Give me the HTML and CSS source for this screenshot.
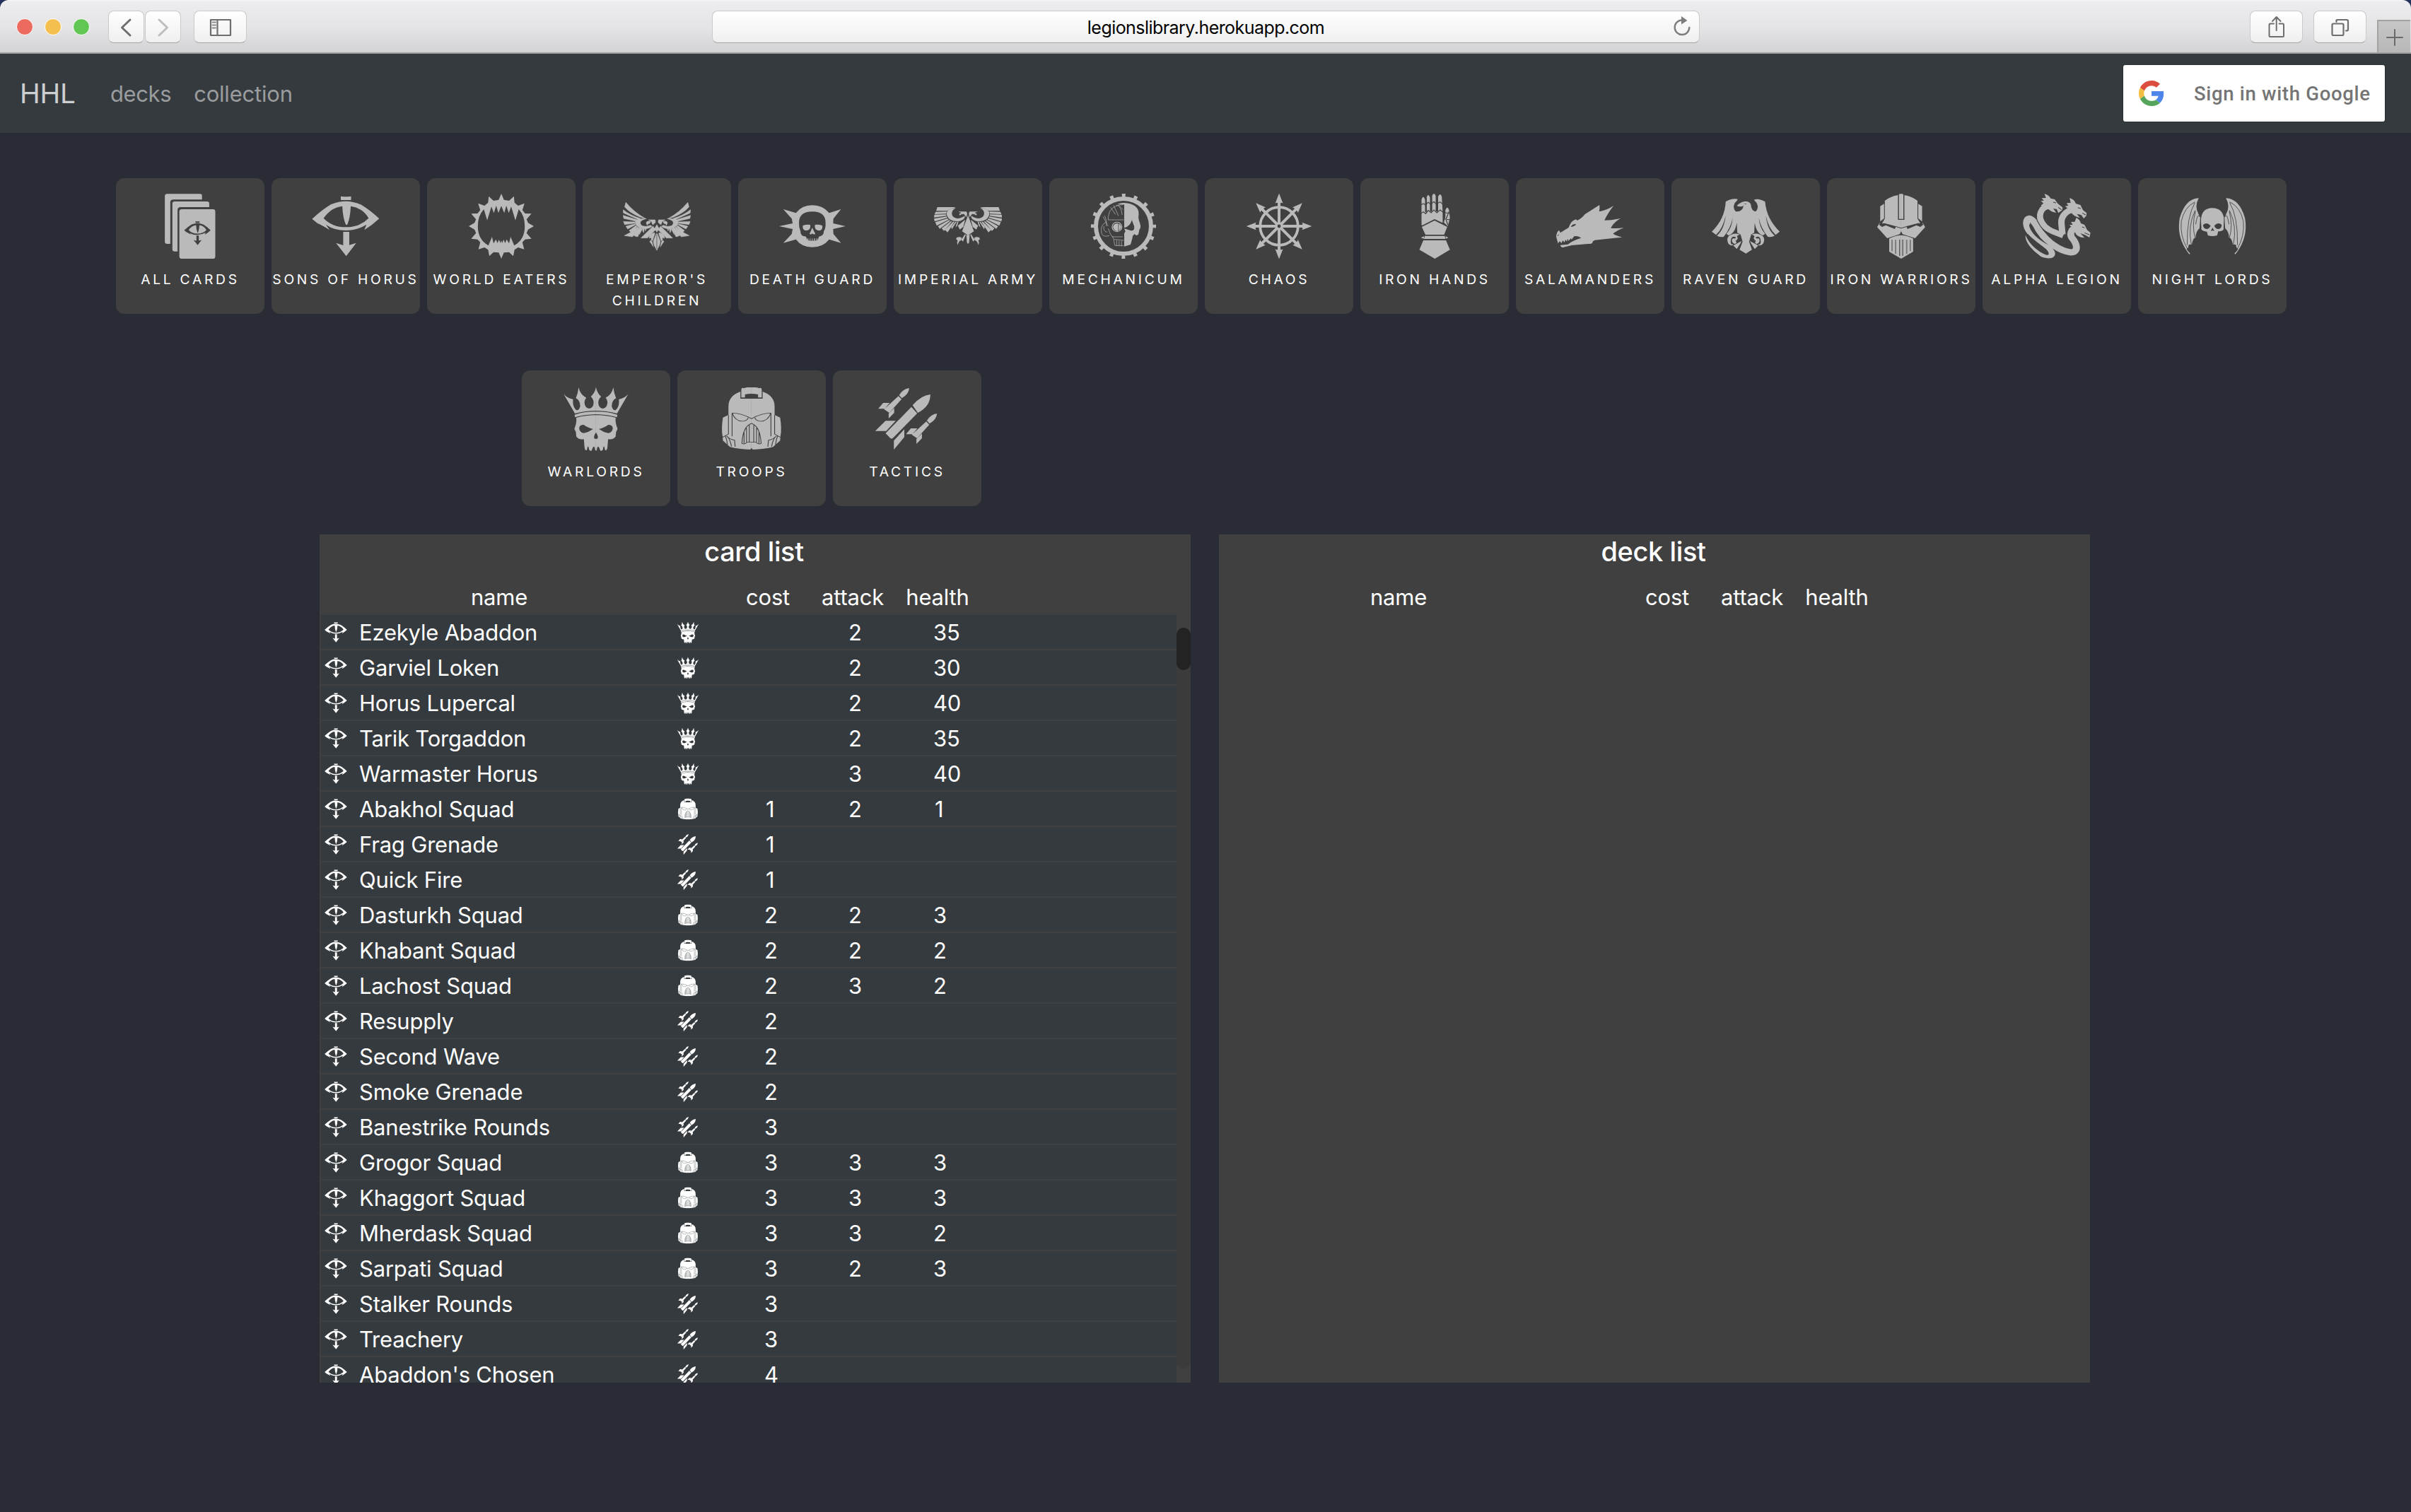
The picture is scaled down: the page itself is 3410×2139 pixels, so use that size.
FILE: index.html
```
<!DOCTYPE html>
<html lang="en">
<head>
<meta charset="utf-8">
<title>HHL</title>
<link rel="stylesheet" href="styles.css">
</head>
<body>
<svg class="sprite" aria-hidden="true">
<symbol id="cards" viewBox="166.6 102 224.7 276" preserveAspectRatio="none">
<path d="M203 103H311Q318 103 318 110V127H224Q213 127 213 138V315H203Q195 315 195 306V112Q195 103 203 103Z"/>
<path d="M228 135H334Q342 135 342 143V159H247Q237 160 237 171V347H228Q220 347 220 338V144Q220 135 228 135Z"/>
<rect x="243" y="168" width="119" height="210" rx="8" ry="10"/>
<g class="cutfill" transform="translate(-9.7 173.8) scale(.394 .4)"><path fill-rule="evenodd" d="M777 113Q793 116 811 113V129H777ZM682 209Q715 170 745 147Q770 134 794 134Q818 134 845 149Q878 175 904 208L880 234L855 256L862 233Q830 258 794 258Q755 258 728 234L740 256Q715 236 700 228ZM720 206Q745 160 782 155Q784 205 793 232Q797 238 799 232Q808 205 810 155Q850 163 869 206Q840 244 794 244Q748 244 720 206ZM785 264H805V320L828 311L795 367L761 311L785 321Z"/></g>
</symbol>
<symbol id="horus" viewBox="681 102 224.7 276" preserveAspectRatio="none">
<path fill-rule="evenodd" d="M777 113Q793 116 811 113V129H777ZM682 209Q715 170 745 147Q770 134 794 134Q818 134 845 149Q878 175 904 208L880 234L855 256L862 233Q830 258 794 258Q755 258 728 234L740 256Q715 236 700 228ZM720 206Q745 160 782 155Q784 205 793 232Q797 238 799 232Q808 205 810 155Q850 163 869 206Q840 244 794 244Q748 244 720 206ZM785 264H805V320L828 311L795 367L761 311L785 321Z"/>
</symbol>
<symbol id="eaters" viewBox="1195.9 102 224.7 276" preserveAspectRatio="none">
<path id="eat" d="M1308.3 102L1317 128L1334 132L1350 113L1352 140L1364 153L1385 143L1378 172L1387 186L1408 187L1392 211L1397 226L1416 240L1397 254L1392 269L1408 293L1387 296L1378 308L1384 338L1364 330L1352 340L1348 367L1334 350L1317 352L1308 378V300L1311 312L1316 297L1321 312L1326 296L1334 313L1339 285L1351 322Q1386 297 1386 240Q1386 195 1366 168L1355 215L1341 157L1333 184L1325 153L1318 184L1308 153Z"/>
<use href="#eat" transform="translate(2616.6 0) scale(-1 1)"/>
</symbol>
<symbol id="emperor" viewBox="166.2 102 224.7 276" preserveAspectRatio="none">
<g id="emp" class="bold"><path d="M381 139L385 158Q370 182 333 202L316 208Q355 180 381 139ZM390 170L389 184L338 213L333 207Q368 193 390 170ZM390 194L388 207L347 219L341 214ZM389 220L385 233L351 227V222ZM381 240L375 252L349 234L350 230ZM370 258L363 269L344 242L347 237ZM359 262L386 280L359 285L338 246L342 243ZM342 258L348 284L341 284L331 249L336 246Z"/>
<path d="M359 277L348 283L330 250L335 246ZM336 262L331 249L326 251L336 275ZM325 262L326 250L320 250L322 268ZM316 260L318 250L313 250Z"/>
<path d="M284 213H306L297 219L292 234L283 224ZM299 219L310 219Q317 226 310 236Q309 228 302 228ZM313 208Q352 206 350 226Q345 248 318 251Q300 249 294 240L300 236Q316 245 328 238Q338 226 329 216Q322 211 313 208ZM291 240L331 290H310L283 256ZM278.5 234L286 250L278.5 265Z"/>
<path d="M278.5 341Q290 320 290 304L280 271V341ZM287 267Q303 275 304 288Q303 295 300 289Q296 285 297 300L293 302L285 272ZM299 300L302 306L298 312L290 328L294 306Z"/></g>
<use href="#emp" transform="translate(557 0) scale(-1 1)"/>
</symbol>
<symbol id="death" viewBox="681 102 224.7 276" preserveAspectRatio="none">
<path fill-rule="evenodd" d="M793 151Q828 151 849 184L888 168L863 208L862 228L903 240L862 252L863 273L888 311L849 296Q828 329 793 329Q758 329 739 296L697 311L725 273L728 252L683 240L728 228L725 208L697 168L739 184Q758 151 793 151ZM749 225Q749 178 793 178Q837 178 837 225Q838 248 831 262Q832 281 815 284L811 299Q793 304 777 299L772 284Q753 283 754 262Q748 245 749 225Z"/>
<path d="M762 237Q775 231 786 234Q790 256 772 259Q759 256 762 237ZM826 237Q813 231 802 234Q798 256 816 259Q829 256 826 237ZM793 247L784 272Q788 278 793 271Q799 278 803 272ZM777 292H780V301H777ZM785 292H787V302H785ZM792 292H794V302H792ZM799 292H802V302H799ZM807 292H810V302H807Z"/>
</symbol>
<symbol id="army" viewBox="1195.9 102 224.7 276" preserveAspectRatio="none">
<g id="arm"><path d="M1349 159H1410L1414 175H1378L1368 168ZM1379 178L1416 179L1419 189L1381 187ZM1381 190L1420 191L1421 203L1380 196ZM1379 199L1421 208L1419 220L1377 204ZM1376 207L1417 223L1412 238L1373 212ZM1371 214L1408 240L1402 251L1367 217ZM1365 219L1396 249L1388 260L1361 220ZM1358 221L1385 256L1376 266L1353 221ZM1350 221L1364 244L1362 253L1346 221ZM1344 221L1350 245L1344 238L1340 220Z"/>
<path d="M1349 162Q1385 166 1378 195Q1368 225 1335 218Q1318 212 1319 196L1327 202Q1348 215 1360 196Q1368 178 1349 162ZM1314 178H1341L1330 184Q1341 186 1336 194Q1330 187 1322 188L1314 202L1311 186ZM1308 192L1328 262L1308 279ZM1318 212L1342 238L1336 254L1324 243ZM1308 279L1314 276L1312 310L1308 316ZM1318 273L1331 298L1325 305L1316 277ZM1329 290Q1335 283 1346 288L1348 296Q1340 297 1345 310L1342 320Q1340 303 1332 300Z"/></g>
<use href="#arm" transform="translate(2617 0) scale(-1 1)"/>
</symbol>
<symbol id="mech" viewBox="166.2 102 224.7 276" preserveAspectRatio="none">
<g transform="translate(278.5 240) scale(2.34 3)"><circle class="line" r="39" stroke-width="6"/><circle class="line" r="43.7" stroke-width="4.8" stroke-dasharray="5 12.16" stroke-dashoffset="2.5"/></g>
<path d="M258 147Q270 140 281 141Q330 145 329 190Q326 205 333 228Q338 245 331 256L328 274Q322 284 315 273Q308 280 308 290L302 318L281 326V271L285 262L281 250L300 257Q316 264 314 240L306 214Q302 240 281 247V148Z"/>
<path class="line" stroke-width="1.8" d="M279 148Q232 150 228 200V213H279M246 152L262 196M236 160L252 190M254 150Q272 155 274 192M262 150L277 170M216 195L222 216V240M211 200L228 240M222 222Q200 235 206 270Q210 288 232 280M228 250L236 275L245 290L250 322H279M214 240Q210 262 224 265M240 285H276M256 300V324M264 302V325M272 302V326M248 296L279 300"/>
<ellipse class="line" stroke-width="3" cx="257" cy="243" rx="16" ry="20"/><path d="M244 243Q246 229 257 228Q270 229 271 243Q268 260 257 261Q246 258 244 243Z"/><path class="cut" stroke-width="2" d="M262 228V262"/>
</symbol>
<symbol id="chaos" viewBox="681 102 224.7 276" preserveAspectRatio="none">
<g transform="translate(793.5 240) scale(2.34 3)"><circle class="line" r="26.8" stroke-width="3.8"/>
<g id="spoke"><path d="M-2 0V-33Q-4-34-5.6-32L0-46.3L5.6-32Q4-34 2-33V0Z"/><path d="M-2 0V33Q-4 34-5.6 32L0 46.3L5.6 32Q4 34 2 33V0Z"/></g>
<use href="#spoke" transform="rotate(45)"/><use href="#spoke" transform="rotate(90)"/><use href="#spoke" transform="rotate(135)"/><circle r="5"/><circle class="cutfill" r="2.4"/></g>
</symbol>
<symbol id="hands" viewBox="1195.9 102 224.7 276" preserveAspectRatio="none">
<path d="M1265 235V128Q1270 104 1277 128V182L1282 178V118Q1287 96 1293 118V178L1300 178V112Q1306 92 1312 112V178L1320 178V114Q1327 96 1332 114L1335 180V226L1308 210L1268 236ZM1339 224L1344 200V172Q1351 150 1356 172L1359 205L1352 240ZM1308 216L1350 243L1340 276H1278L1266 243ZM1276 281H1342L1344 294H1273ZM1263 289L1273 283V293ZM1354 289L1345 283V293ZM1271 300H1346L1359 340L1309 378L1258 340Z"/>
<path class="cut" stroke-width="3" d="M1262 150L1271 144L1279 150L1287 138L1295 147L1306 136L1314 146L1326 137L1335 146M1262 187L1271 179L1279 187L1287 173L1297 183L1306 171L1316 183L1327 171L1337 182M1342 182L1358 186M1341 209L1360 213M1356 178L1346 210L1352 235"/>
<path class="cut" stroke-width="5" d="M1280 120V178M1297 115V178M1316 115V174"/>
</symbol>
<symbol id="salam" viewBox="198.8 102 268.8 276" preserveAspectRatio="none">
<path fill-rule="evenodd" d="M199 285Q200 262 211 258L215 268L248 246Q258 215 278 211L281 216Q300 208 312 190L370 150Q372 162 369 178Q400 172 426 153Q400 190 390 215Q425 215 454 206Q425 225 415 248Q440 250 467 247Q435 260 424 272Q440 282 460 287L352 299Q343 302 341 312Q337 316 325 315L260 321L226 330Q217 330 215 320L245 317Q265 300 298 290Q285 279 270 283L260 297L257 291L248 303L245 293L241 305L236 297L231 309L225 300L220 312L213 304L206 313ZM257 243Q262 230 277 231Q275 240 257 243ZM204 279L210 273L206 283Z"/>
</symbol>
<symbol id="raven" viewBox="814.8 102 268.8 276" preserveAspectRatio="none">
<path fill-rule="evenodd" d="M914 154Q930 134 950 134Q972 136 971 158Q977 178 990 177Q1003 160 992 140L982 128Q1000 120 1026 136Q1032 210 1084 263L1068 277Q1040 250 1029 195Q1035 255 1064 280Q1055 288 1037 285Q1010 250 1001 205Q1005 250 1026 272L1018 279Q992 272 985 225L983 268L971 275L963 306L974 340L950 356L925 340L937 306L929 275L916 268L914 225Q907 272 881 279L873 272Q894 250 898 205Q889 250 862 285Q844 288 835 280Q864 255 870 195Q859 250 832 277L815 263Q867 210 870 136Q895 120 918 125Q915 133 907 140Q896 160 909 177Q935 182 941 153Q930 160 914 154ZM941 147L953 143L950 147Z"/>
<path id="claw" d="M972 276Q990 268 1005 275Q1025 280 1022 303Q1018 324 1001 321Q995 315 1006 317Q1012 305 1006 290Q1000 280 988 288Q995 296 999 290Q1010 300 999 312Q990 320 986 308L990 302Q983 300 981 289Q990 280 972 276ZM966 303L999 322L985 337L970 312Z"/><use href="#claw" transform="translate(1899 0) scale(-1 1)"/>
</symbol>
<symbol id="warriors" viewBox="-107.3 102 264.1 276" preserveAspectRatio="none">
<g id="war"><path fill-rule="evenodd" d="M24.5 102L33 104V209H24.5ZM37 108Q70 115 88 132V208L99 228L90 227L46 240L24.5 247V213H37ZM91 145L106 155V220L91 207ZM106 222L118 244L79 291L30 274L24.5 262V250L46 243L49 252L84 236L99 243L110 234ZM24.5 278Q50 280 71 292V348L24.5 378Z"/>
<path class="cut" stroke-width="3" d="M30.5 297V366"/><path class="cut" stroke-width="5" opacity=".55" d="M46 298V357M60 298V346"/></g>
<use href="#war" transform="translate(49 0) scale(-1 1)"/>
</symbol>
<symbol id="alpha" viewBox="497.9 102 264.1 276" preserveAspectRatio="none">
<path class="line" stroke-width="24" d="M604 154C562 158 558 200 573 226C590 258 625 266 655 280"/>
<path class="line" stroke-width="25" d="M694 170C660 175 646 205 648 228L652 275"/>
<path class="line" stroke-width="27" d="M716 248C690 245 678 268 688 288C712 318 714 351 685 351C640 345 595 310 560 256C545 222 533 208 522 208C508 212 508 240 528 266"/>
<path d="M500 235C503 270 545 300 580 330C600 345 605 365 590 362C560 350 525 320 508 278C506 315 545 350 570 370C605 384 630 374 622 348C612 320 560 290 532 250Z"/>
<path class="cutfill" d="M606 283Q650 286 678 306Q686 323 670 325Q640 318 606 283ZM523 232Q532 228 544 256Q562 292 598 320Q535 285 523 240Z"/>
<path d="M582 102Q600 108 606 122L622 126L634 144L652 160Q655 172 643 178L636 184L630 168L616 165L628 183Q605 180 590 160L568 152L578 143L568 133L580 132L571 121L588 120ZM680 120Q700 128 704 144L722 150L732 172L746 184L745 196L735 207L725 192L708 188L720 204Q695 200 684 178L660 174L672 164L662 155L675 153L668 142L684 141ZM706 204Q720 212 724 228L738 234L748 256L761 268L757 288L742 278L722 270L738 289Q708 288 700 264L676 250L690 246L679 235L692 233L685 222L700 221Z"/>
<path class="cut" stroke-width="3" d="M616 138L627 141M636 160L648 170M712 161L723 165M730 184L742 192M729 243L738 247M738 268L756 276"/>
<path class="cut" stroke-width="3" d="M553 215C572 255 590 275 612 285M672 205Q664 230 669 266"/>
</symbol>
<symbol id="night" viewBox="1103.1 102 264.1 276" preserveAspectRatio="none">
<g id="nig"><path d="M1288 121Q1340 123 1362 205Q1376 290 1325 359L1321 356Q1334 342 1335 336Q1328 335 1327 318L1315 318Q1311 290 1300 288Q1300 262 1285 249L1282 205L1289 188Q1306 155 1288 121Z"/>
<path class="cut" stroke-width="2.4" d="M1303 137Q1345 160 1356 220Q1362 280 1332 337M1303 140Q1335 200 1333 320M1302 173Q1332 240 1317 318M1301 176Q1316 240 1302 288M1285 200Q1292 180 1300 232"/></g>
<use href="#nig" transform="translate(2470.4 0) scale(-1 1)"/>
<path fill-rule="evenodd" d="M1191 215Q1192 164 1235 163Q1279 164 1281 215L1279 254Q1272 262 1258 262L1254 279Q1235 285 1218 279L1214 263Q1196 262 1192 252ZM1199 235Q1213 220 1228 238Q1225 252 1211 252Q1200 250 1199 235ZM1272 235Q1258 220 1243 238Q1246 252 1260 252Q1271 250 1272 235ZM1236 246L1229 261L1236 258L1243 261Z"/>
<path class="cut" stroke-width="2" d="M1189 205L1191 250M1282 205L1280 250"/>
</symbol>
<symbol id="crown" viewBox="149.9 108 221.4 276" preserveAspectRatio="none">
<g id="cro"><path d="M260.4 113Q264 138 277 153Q268 165 268 178Q268 202 283 204Q298 202 298 175Q297 165 292 158Q312 145 317 114Q319 140 326 160Q311 170 312 195Q316 214 325 210Q338 195 335 165Q355 160 366 142L329 225Q295 213 260.4 213ZM260.4 217Q300 217 330 230L329 241Q300 229 260.4 228ZM260.4 232Q295 232 325 243Q322 262 331 290Q324 302 325 322Q318 337 300 334L298 365Q297 384 290 380Q286 350 283 378Q277 388 274 380Q266 350 263 380L260.4 383V332L265 332Q270 322 260.4 305ZM270 291Q285 305 300 308Q316 305 315 284Q312 272 300 273Q290 284 270 291Z" fill-rule="evenodd"/></g>
<use href="#cro" transform="translate(520.8 0) scale(-1 1)"/>
</symbol>
<symbol id="helm" viewBox="657.2 108 221.4 276" preserveAspectRatio="none">
<g id="hel"><path d="M767.7 114H781Q790 115 792 118Q801 113 801 126V157H789V144Q779 141 767.7 141ZM767.7 162H804V132Q843 150 843 195V231L861 242Q867 290 862 322L861 340L838 367Q810 377 772 378L767.7 371Z"/>
<path class="cut" stroke-width="2.6" d="M767.7 247Q800 223 831 223V322M831 223Q819 262 792 257Q780 253 779 243M767.7 267Q796 280 799 352Q790 358 783 347H767.7M775 274V346M784 287V346M792 305V352M821 366L823 338Q838 335 849 320M843 232V312L862 326M833 365Q838 335 845 325M846 358Q848 335 853 320"/></g>
<use href="#hel" transform="translate(1535.4 0) scale(-1 1)"/>
</symbol>
<symbol id="rocket" viewBox="1164.5 108 221.4 276" preserveAspectRatio="none">
<path d="M1351 144Q1351 195 1310 222L1293 190Q1320 148 1351 144ZM1289 197L1308 224L1230 328Q1224 335 1219 328L1205 309ZM1205 256H1238L1207 299H1171ZM1266 292V325L1232 378V340Z"/>
<g id="mini"><path d="M1282 117Q1281 142 1258 160L1249 147Q1262 120 1282 117ZM1247 151L1257 164L1217 222L1200 207ZM1197 180H1218L1202 205H1181ZM1233 202V222L1215 246V225Z"/></g>
<use href="#mini" transform="translate(90.5 108)"/>
</symbol>
</svg>

<div class="window">
<header class="toolbar">
  <div class="lights"><i class="red"></i><i class="amber"></i><i class="green"></i></div>
  <div class="pair">
    <span class="btn nav"><svg width="51" height="45"><path d="M31 12L19.500 23L31 34" stroke="#6e6e6e" stroke-width="3"/></svg></span>
    <span class="btn nav"><svg width="51" height="45"><path d="M20 12L31.500 23L20 34" stroke="#bdbdbd" stroke-width="3"/></svg></span>
  </div>
  <span class="btn wide"><svg width="75" height="45"><path d="M24 12H52V34H24ZM33.500 12V34" stroke="#6e6e6e" stroke-width="2.200"/><path d="M26.500 15.500H31M26.500 19.500H31M26.500 23.500H31" stroke="#8a8a8a" stroke-width="1.800"/></svg></span>
  <div class="address"><span>legionslibrary.herokuapp.com</span><svg width="28" height="32"><path d="M13 5.500A10.300 10.300 0 1 0 24.300 16" stroke="#7c7c7c" stroke-width="2.400"/><path d="M13 0L21.500 6L13 11.500Z" fill="#7c7c7c" stroke="none"/></svg></div>
  <span class="btn wide share"><svg width="75" height="45"><path d="M34 17.500H29Q27.500 17.500 27.500 19V34.500Q27.500 36 29 36H46.500Q48 36 48 34.500V19Q48 17.500 46.500 17.500H41.500M37.700 27V8.500M32 14L37.700 8L43.500 14" stroke="#6e6e6e" stroke-width="2"/></svg></span>
  <span class="btn wide tabs"><svg width="75" height="45"><path d="M28 17.500H41Q42.500 17.500 42.500 19V32Q42.500 34 41 34H28Q26.500 34 26.500 32V19Q26.500 17.500 28 17.500ZM32.500 15V12.500Q32.500 12 33.500 12H47Q49 12 49 13.500V26Q49 27.500 46 27.500" stroke="#6e6e6e" stroke-width="2.200"/></svg></span>
  <span class="newtab"><svg width="45" height="44"><path d="M12 23H34M23 12V34" stroke="#6a6a6a" stroke-width="2"/></svg></span>
</header>

<nav class="navbar">
  <a class="brand">HHL</a><a class="link">decks</a><a class="link">collection</a>
  <button class="google"><svg width="36" height="36" viewBox="0 0 48 48"><path fill="#db4d3f" d="M24 9.500c3.540 0 6.710 1.220 9.210 3.600l6.850-6.850C35.900 2.380 30.470 0 24 0 14.620 0 6.510 5.380 2.560 13.220l7.980 6.190C12.430 13.720 17.740 9.500 24 9.500z"/><path fill="#4f86ec" d="M46.980 24.550c0-1.570-.15-3.090-.38-4.550H24v9.020h12.940c-.58 2.960-2.260 5.480-4.780 7.180l7.730 6c4.510-4.180 7.090-10.360 7.090-17.650z"/><path fill="#f2bd42" d="M10.530 28.590c-.48-1.450-.76-2.990-.76-4.590s.27-3.140.76-4.590l-7.980-6.190C.92 16.460 0 20.120 0 24c0 3.880.92 7.540 2.560 10.780l7.970-6.190z"/><path fill="#56a55c" d="M24 48c6.480 0 11.930-2.130 15.890-5.810l-7.730-6c-2.150 1.450-4.920 2.300-8.160 2.300-6.260 0-11.570-4.220-13.470-9.910l-7.980 6.190C6.510 42.620 14.620 48 24 48z"/></svg><span>Sign in with Google</span></button>
</nav>

<main>
<section class="tiles">
  <div class="tile"><svg><use href="#cards"/></svg><b>ALL CARDS</b></div>
  <div class="tile"><svg><use href="#horus"/></svg><b>SONS OF HORUS</b></div>
  <div class="tile"><svg><use href="#eaters"/></svg><b>WORLD EATERS</b></div>
  <div class="tile"><svg><use href="#emperor"/></svg><b>EMPEROR'S<br>CHILDREN</b></div>
  <div class="tile"><svg><use href="#death"/></svg><b>DEATH GUARD</b></div>
  <div class="tile"><svg><use href="#army"/></svg><b>IMPERIAL ARMY</b></div>
  <div class="tile"><svg><use href="#mech"/></svg><b>MECHANICUM</b></div>
  <div class="tile"><svg><use href="#chaos"/></svg><b>CHAOS</b></div>
  <div class="tile"><svg><use href="#hands"/></svg><b>IRON HANDS</b></div>
  <div class="tile"><svg><use href="#salam"/></svg><b>SALAMANDERS</b></div>
  <div class="tile"><svg><use href="#raven"/></svg><b>RAVEN GUARD</b></div>
  <div class="tile"><svg><use href="#warriors"/></svg><b>IRON WARRIORS</b></div>
  <div class="tile"><svg><use href="#alpha"/></svg><b>ALPHA LEGION</b></div>
  <div class="tile"><svg><use href="#night"/></svg><b>NIGHT LORDS</b></div>
</section>
<section class="tiles types">
  <div class="tile"><svg><use href="#crown"/></svg><b>WARLORDS</b></div>
  <div class="tile"><svg><use href="#helm"/></svg><b>TROOPS</b></div>
  <div class="tile"><svg><use href="#rocket"/></svg><b>TACTICS</b></div>
</section>
<section class="panels">
  <div class="panel">
    <h2>card list</h2>
    <div class="head"><span>name</span><i></i><span>cost</span><span>attack</span><span>health</span></div>
    <div class="body">
      <div class="rows">
        <div class="row"><svg><use href="#horus"/></svg><span>Ezekyle Abaddon</span><svg><use href="#crown"/></svg><span></span><span>2</span><span>35</span></div>
        <div class="row"><svg><use href="#horus"/></svg><span>Garviel Loken</span><svg><use href="#crown"/></svg><span></span><span>2</span><span>30</span></div>
        <div class="row"><svg><use href="#horus"/></svg><span>Horus Lupercal</span><svg><use href="#crown"/></svg><span></span><span>2</span><span>40</span></div>
        <div class="row"><svg><use href="#horus"/></svg><span>Tarik Torgaddon</span><svg><use href="#crown"/></svg><span></span><span>2</span><span>35</span></div>
        <div class="row"><svg><use href="#horus"/></svg><span>Warmaster Horus</span><svg><use href="#crown"/></svg><span></span><span>3</span><span>40</span></div>
        <div class="row"><svg><use href="#horus"/></svg><span>Abakhol Squad</span><svg><use href="#helm"/></svg><span class="one">1</span><span>2</span><span class="one">1</span></div>
        <div class="row"><svg><use href="#horus"/></svg><span>Frag Grenade</span><svg><use href="#rocket"/></svg><span class="one">1</span></div>
        <div class="row"><svg><use href="#horus"/></svg><span>Quick Fire</span><svg><use href="#rocket"/></svg><span class="one">1</span></div>
        <div class="row"><svg><use href="#horus"/></svg><span>Dasturkh Squad</span><svg><use href="#helm"/></svg><span>2</span><span>2</span><span>3</span></div>
        <div class="row"><svg><use href="#horus"/></svg><span>Khabant Squad</span><svg><use href="#helm"/></svg><span>2</span><span>2</span><span>2</span></div>
        <div class="row"><svg><use href="#horus"/></svg><span>Lachost Squad</span><svg><use href="#helm"/></svg><span>2</span><span>3</span><span>2</span></div>
        <div class="row"><svg><use href="#horus"/></svg><span>Resupply</span><svg><use href="#rocket"/></svg><span>2</span></div>
        <div class="row"><svg><use href="#horus"/></svg><span>Second Wave</span><svg><use href="#rocket"/></svg><span>2</span></div>
        <div class="row"><svg><use href="#horus"/></svg><span>Smoke Grenade</span><svg><use href="#rocket"/></svg><span>2</span></div>
        <div class="row"><svg><use href="#horus"/></svg><span>Banestrike Rounds</span><svg><use href="#rocket"/></svg><span>3</span></div>
        <div class="row"><svg><use href="#horus"/></svg><span>Grogor Squad</span><svg><use href="#helm"/></svg><span>3</span><span>3</span><span>3</span></div>
        <div class="row"><svg><use href="#horus"/></svg><span>Khaggort Squad</span><svg><use href="#helm"/></svg><span>3</span><span>3</span><span>3</span></div>
        <div class="row"><svg><use href="#horus"/></svg><span>Mherdask Squad</span><svg><use href="#helm"/></svg><span>3</span><span>3</span><span>2</span></div>
        <div class="row"><svg><use href="#horus"/></svg><span>Sarpati Squad</span><svg><use href="#helm"/></svg><span>3</span><span>2</span><span>3</span></div>
        <div class="row"><svg><use href="#horus"/></svg><span>Stalker Rounds</span><svg><use href="#rocket"/></svg><span>3</span></div>
        <div class="row"><svg><use href="#horus"/></svg><span>Treachery</span><svg><use href="#rocket"/></svg><span>3</span></div>
        <div class="row"><svg><use href="#horus"/></svg><span>Abaddon's Chosen</span><svg><use href="#rocket"/></svg><span>4</span></div>
      </div>
      <div class="track"><div class="thumb"></div></div>
    </div>
  </div>
  <div class="panel">
    <h2>deck list</h2>
    <div class="head"><span>name</span><i></i><span>cost</span><span>attack</span><span>health</span></div>
  </div>
</section>
</main>
</div>
</body>
</html>
```
FILE: styles.css
```
* { box-sizing: border-box; }
html { background: #23315f; }
body { margin: 0; font-family: Inter, "Liberation Sans", sans-serif; font-size: 31px; letter-spacing: -.2px; color: #fff; }
svg { display: block; flex: none; }
.sprite { position: absolute; width: 0; height: 0; }
.window { height: 2139px; overflow: hidden; background: #292c34; border-radius: 12px 12px 0 0; }

/* icon parts */
.line { fill: none; stroke: var(--ink); }
.bold { stroke: var(--ink); stroke-width: 1.5; }
.cut { fill: none; stroke: var(--back); }
.cutfill { fill: var(--back); }

/* browser toolbar */
.toolbar { display: flex; align-items: flex-start; height: 76px; padding: 15px 0 0 23px; background: linear-gradient(#f6f6f6 0, #ececee 3px, #e4e4e6 40px, #d3d3d5 74px); border-bottom: 2px solid #a0a1a2; }
.toolbar svg { fill: none; stroke-linejoin: round; stroke-linecap: round; }
.lights { display: flex; gap: 16px; padding-top: 11px; width: 130px; }
.lights i { width: 24px; height: 24px; border-radius: 50%; border: 1px solid; }
.red { background: #ec6a5e; border-color: #d35449; }
.amber { background: #f5bf4f; border-color: #d7a13c; }
.green { background: #61c654; border-color: #4ea73f; }
.pair { display: flex; width: 121px; gap: 1px; }
.btn, .address { height: 46px; border-radius: 8px; background: linear-gradient(#fff, #efefef); border: 1px solid #cacaca; border-bottom: 1px solid #a5a5a6; display: flex; align-items: center; justify-content: center; }
.nav { width: 51px; }
.wide { width: 75px; }
.address { width: 1397px; margin-left: 658px; color: #000; font-size: 25px; letter-spacing: -.55px; position: relative; padding-top: 2px; }
.address svg { position: absolute; right: 10px; top: 7px; }
.share { margin-left: 778px; }
.tabs { margin-left: 15px; }
.newtab { margin: 13px 0 0 15px; width: 47px; height: 46px; border: 2px solid #a3a3a4; border-width: 2px 0 0 2px; background: linear-gradient(#c6c6c7, #b8b8b9); }

/* site navigation */
.navbar { display: flex; align-items: center; height: 112px; padding: 0 37px 0 28px; background: #353a3e; color: #9a9c9e; }
.brand { width: 128px; font-size: 38.700px; color: #cdcecf; }
.link { margin-right: 32px; letter-spacing: -.4px; }
.link + .link { margin: 0; letter-spacing: -.2px; }
.google { margin: -1px 0 0 auto; width: 370px; height: 80px; display: flex; align-items: center; padding: 0 0 0 22px; border: 0; border-radius: 3px; background: #fff; font: 500 27.500px Roboto, sans-serif; letter-spacing: .69px; color: #757575; box-shadow: 0 0 2px rgba(0, 0, 0, .5); }
.google span { margin-left: 42px; padding-top: 1px; }

/* faction and type tiles */
main { padding-top: 64px; }
.tiles { display: flex; gap: 10px; padding-left: 164px; }
.types { padding-left: 738px; margin-top: 80px; }
.tile { width: 210px; height: 192px; flex: none; border-radius: 12px; background: #404040; display: flex; flex-direction: column; align-items: center; padding-top: 22px; gap: 14px; fill: #bababa; --ink: #bababa; --back: #404040; }
.tile svg { width: 96px; height: 92px; }
.tile b { font-weight: 400; font-size: 19.300px; line-height: 30px; letter-spacing: 3.700px; text-align: center; white-space: nowrap; }

/* lists */
.panels { display: flex; gap: 40px; margin-top: 40px; padding-left: 452px; }
.panel { width: 1232px; height: 1200px; background: #404040; }
h2 { margin: 0; height: 64px; padding-right: 3px; font-size: 38px; line-height: 48px; font-weight: 500; letter-spacing: -.4px; text-align: center; }
.head { display: grid; grid-template-columns: 508px 66px repeat(3, 120px); height: 50px; line-height: 50px; text-align: center; }
.body { display: flex; height: 1086px; overflow: hidden; padding-left: 2px; }
.rows { width: 1210px; display: flex; flex-direction: column; gap: 2px; fill: #fff; --ink: #fff; --back: #353a3e; }
.row { display: grid; grid-template-columns: 49px 449px 124px 119px 120px 120px; align-items: center; flex: none; height: 48px; line-height: 46px; padding-left: 5px; background: #353a3e; }
.row span { padding-top: 2px; }
.row .one { padding-left: 2px; }
.row svg { width: 32px; height: 31px; }
.track { width: 20px; height: 1048px; margin-top: 18px; border-radius: 10px; background: #3b3b3b; }
.thumb { height: 60px; border-radius: 10px; background: #232323; }
```
